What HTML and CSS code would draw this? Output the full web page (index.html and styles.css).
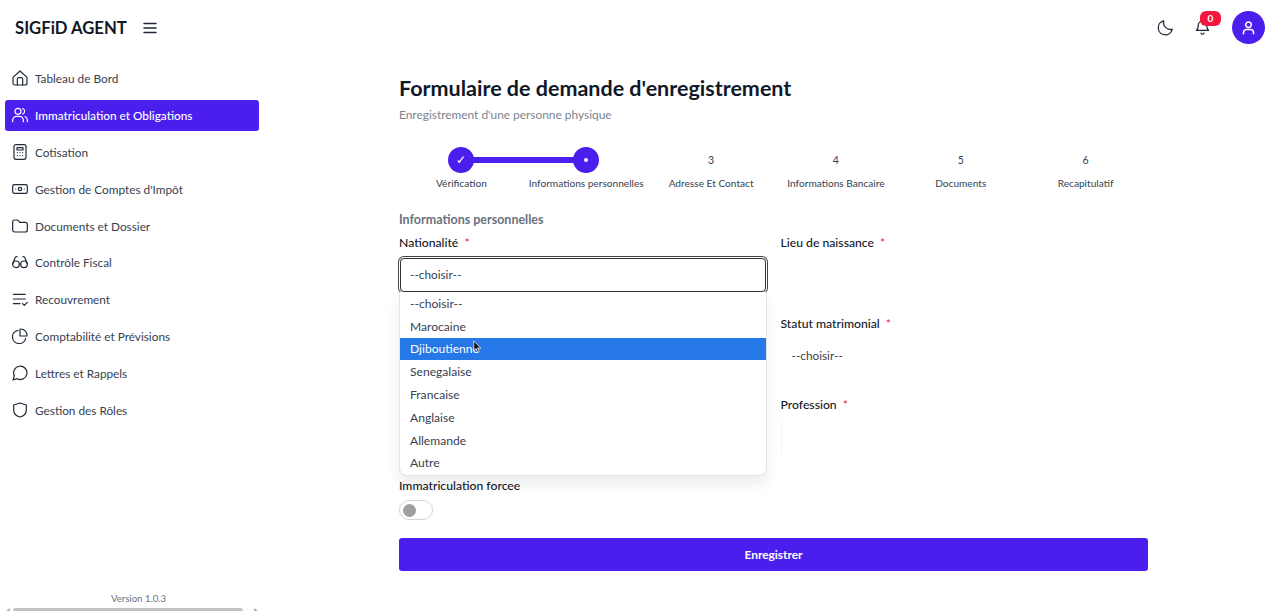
FILE: index.html
```html
<!DOCTYPE html>
<html lang="fr">
<head>
<meta charset="utf-8">
<title>SIGFiD AGENT</title>
<link rel="stylesheet" href="styles.css">
</head>
<body>
<div class="app">
  <aside class="sidebar">
    <div class="brand">
      <span class="brand-name">SIGFiD AGENT</span>
      <svg class="burger" viewBox="0 0 24 24"><path d="M4 6h16M4 12h16M4 18h16"/></svg>
    </div>
    <nav class="nav">
      <a class="nav-item"><svg class="ico" viewBox="0 0 24 24"><path d="M1.500 11 12 1.500 22.500 11v8.500a3 3 0 0 1-3 3h-15a3 3 0 0 1-3-3z"/><path d="M8 22.500V13.500a2 2 0 0 1 2-2h4a2 2 0 0 1 2 2v9"/></svg>Tableau de Bord</a>
      <a class="nav-item active"><svg class="ico" viewBox="0 0 24 24"><circle cx="9" cy="6.500" r="4.500"/><path d="M1 22v-2a6 6 0 0 1 6-6h4a6 6 0 0 1 6 6v2"/><path d="M16 2.300a4.500 4.500 0 0 1 0 8.400M19.500 14.300A6 6 0 0 1 23 20v2"/></svg>Immatriculation et Obligations</a>
      <a class="nav-item"><svg class="ico" viewBox="0 0 24 24"><rect x="3" y="1" width="18" height="22" rx="3"/><path d="M7.500 5.500h9v3.500h-9zM8 13h.01M12 13h.01M16 13h.01M8 17.500h.01M12 17.500h.01M16 17.500h.01"/></svg>Cotisation</a>
      <a class="nav-item"><svg class="ico" viewBox="0 0 24 24"><rect x="1" y="5.500" width="22" height="13" rx="2.500"/><circle cx="12" cy="12" r="2.500"/><path d="M5.500 12h.01M18.500 12h.01"/></svg>Gestion de Comptes d'Impôt</a>
      <a class="nav-item"><svg class="ico" viewBox="0 0 24 24"><path d="M1 6a3 3 0 0 1 3-3h4.800l2.700 3.500H20a3 3 0 0 1 3 3V18a3 3 0 0 1-3 3H4a3 3 0 0 1-3-3z"/></svg>Documents et Dossier</a>
      <a class="nav-item"><svg class="ico" viewBox="0 0 24 24"><circle cx="6" cy="15.500" r="5"/><circle cx="18" cy="15.500" r="5"/><path d="M11 15h2M1 15 4.500 6A3 3 0 0 1 7.500 4M23 15 19.500 6A3 3 0 0 0 16.500 4"/></svg>Contrôle Fiscal</a>
      <a class="nav-item"><svg class="ico" viewBox="0 0 24 24"><path d="M2 5h18M2 12h18M2 19h10M16 19l2.500 2.500L23 17"/></svg>Recouvrement</a>
      <a class="nav-item"><svg class="ico" viewBox="0 0 24 24"><path d="M9 3.500a10 10 0 1 0 11.500 12"/><path d="M13 1.500a9.500 9.500 0 0 1 9.500 9.500v1H12V2.500a1 1 0 0 1 1-1z"/></svg>Comptabilité et Prévisions</a>
      <a class="nav-item"><svg class="ico" viewBox="0 0 24 24"><path d="M1.500 22.500l2-6.200A10 10 0 1 1 7.500 20.500z"/></svg>Lettres et Rappels</a>
      <a class="nav-item"><svg class="ico" viewBox="0 0 24 24"><path d="M12 1.500 21.500 4.500V12c0 5.500-4 9-9.500 10.500C6.500 21 2.500 17.500 2.500 12V4.500z"/></svg>Gestion des Rôles</a>
    </nav>
    <div class="version">Version 1.0.3</div>
    <div class="hscroll"><span class="arrow left"></span><span class="thumb"></span><span class="arrow right"></span></div>
  </aside>
  <div class="content">
    <header class="topbar">
      <svg class="top-ico" viewBox="0 0 24 24"><path d="M21.500 14.500A10 10 0 0 1 9.500 2.500a10 10 0 1 0 12 12z"/></svg>
      <span class="bell">
        <svg class="top-ico" viewBox="0 0 24 24"><path d="M6 9a6 6 0 0 1 12 0c0 5 2.500 7 2.500 7h-17S6 14 6 9zM10 20a2.200 2.200 0 0 0 4 0"/></svg>
        <span class="badge">0</span>
      </span>
      <span class="avatar"><svg viewBox="0 0 24 24"><circle cx="12" cy="7.500" r="4.500"/><path d="M4 22v-2a5 5 0 0 1 5-5h6a5 5 0 0 1 5 5v2"/></svg></span>
    </header>
    <main class="main">
      <h1 class="title">Formulaire de demande d'enregistrement</h1>
      <p class="subtitle">Enregistrement d'une personne physique</p>
      <ol class="steps">
        <li class="step done"><span class="dot">✓</span><span class="step-label">Vérification</span></li>
        <li class="step current"><span class="dot"><i class="pip"></i></span><span class="step-label">Informations personnelles</span></li>
        <li class="step"><span class="dot">3</span><span class="step-label">Adresse Et Contact</span></li>
        <li class="step"><span class="dot">4</span><span class="step-label">Informations Bancaire</span></li>
        <li class="step"><span class="dot">5</span><span class="step-label">Documents</span></li>
        <li class="step"><span class="dot">6</span><span class="step-label">Recapitulatif</span></li>
      </ol>
      <h2 class="section">Informations personnelles</h2>
      <form class="form">
        <div class="field nat">
          <label class="label">Nationalité <b>*</b></label>
          <div class="select focus">--choisir--</div>
          <ul class="dropdown">
            <li>--choisir--</li>
            <li>Marocaine</li>
            <li class="hover">Djiboutienne<svg class="cursor" viewBox="0 0 12 18"><path d="M1 1v13l3.200-3 2.100 5 2-.9-2.100-4.800H10.500z"/></svg></li>
            <li>Senegalaise</li>
            <li>Francaise</li>
            <li>Anglaise</li>
            <li>Allemande</li>
            <li>Autre</li>
          </ul>
        </div>
        <div class="field">
          <label class="label">Lieu de naissance <b>*</b></label>
        </div>
        <div class="field"></div>
        <div class="field">
          <label class="label">Statut matrimonial <b>*</b></label>
          <div class="select plain">--choisir--</div>
        </div>
        <div class="field"></div>
        <div class="field">
          <label class="label">Profession <b>*</b></label>
          <div class="select ghost"></div>
        </div>
        <div class="field">
          <label class="label">Immatriculation forcee</label>
          <span class="toggle"><i></i></span>
        </div>
      </form>
      <button class="submit" type="button">Enregistrer</button>
    </main>
  </div>
</div>
</body>
</html>
```
FILE: styles.css
```css
* { box-sizing: border-box; }
html, body { margin: 0; height: 611px; overflow: hidden; background: #fff; }
body { font-family: Lato, Roboto, "Liberation Sans", sans-serif; color: #1f2937; }
.app { display: flex; height: 611px; }

.sidebar { width: 270px; flex: none; display: flex; flex-direction: column; position: relative; }
.brand { height: 55px; display: flex; align-items: center; gap: 14px; padding-left: 15px; }
.brand-name { font-size: 16.700px; font-weight: 700; color: #111827; }
.burger { width: 18px; height: 18px; fill: none; stroke: #1f2937; stroke-width: 2; stroke-linecap: round; }
.nav { display: flex; flex-direction: column; gap: 5.800px; padding: 8.400px 11px 0 5px; }
.nav-item { height: 31px; display: flex; align-items: center; gap: 7px; padding: 0 0 0 7px; font-size: 11.800px; color: #374151; border-radius: 3px; }
.nav-item.active { background: #4a1fee; color: #fff; font-weight: 500; }
.ico { width: 16px; height: 16px; flex: none; margin-top: -1px; fill: none; stroke: #1f2937; stroke-width: 1.800; stroke-linecap: round; stroke-linejoin: round; }
.active .ico { stroke: #fff; }
.version { margin-top: auto; text-align: center; font-size: 9.600px; line-height: 14px; color: #6b7280; padding: 2px 0 0 7px; width: 270px; }
.hscroll { height: 5px; display: flex; align-items: flex-start; padding: 0 6px; overflow: hidden; }
.thumb { width: 230px; height: 5px; background: #c1c1c1; border-radius: 3px 3px 0 0; margin: 2px 11px 0 3px; }
.arrow { width: 0; height: 0; margin-top: 2px; border-top: 3px solid transparent; border-bottom: 3px solid transparent; }
.arrow.left { border-right: 4px solid #b0b0b0; }
.arrow.right { border-left: 4px solid #b0b0b0; }

.content { flex: 1; min-width: 0; display: flex; flex-direction: column; }
.topbar { height: 55px; display: flex; align-items: center; justify-content: flex-end; padding-right: 15px; }
.top-ico { display: block; width: 17px; height: 17px; fill: none; stroke: #1f2937; stroke-width: 1.800; stroke-linecap: round; stroke-linejoin: round; }
.bell { position: relative; margin-left: 20px; margin-right: 21px; }
.badge { position: absolute; left: 6px; top: -8px; width: 21px; height: 15px; border-radius: 6px; background: #f5163f; color: #fff; font-size: 10px; font-weight: 700; line-height: 15px; text-align: center; }
.avatar { width: 33px; height: 33px; border-radius: 50%; background: #4a1fee; display: flex; align-items: center; justify-content: center; }
.avatar svg { width: 15px; height: 15px; fill: none; stroke: #fff; stroke-width: 2.400; stroke-linecap: round; }

.main { padding: 20px 132px 0 129px; }
.title { margin: 0; font-size: 21.500px; line-height: 27px; font-weight: 700; color: #111827; }
.subtitle { margin: 5px 0 0; font-size: 11.900px; line-height: 16px; color: #7b8490; }
.steps { list-style: none; margin: 24px 0 0; padding: 0; display: grid; grid-template-columns: repeat(6, 1fr); }
.step { display: flex; flex-direction: column; align-items: center; position: relative; font-size: 10.150px; color: #374151; }
.dot { position: relative; z-index: 1; width: 26px; height: 26px; border-radius: 50%; display: flex; align-items: center; justify-content: center; font-size: 10.500px; line-height: 1; color: #374151; }
.done .dot, .current .dot { background: #4a1fee; color: #fff; font-size: 12px; }
.pip { width: 4px; height: 4px; border-radius: 50%; background: #fff; }
.current::before { content: ""; position: absolute; top: 10px; left: -50%; width: 100%; height: 6px; background: #4a1fee; }
.step-label { margin-top: 3px; line-height: 14px; }

.section { margin: 22px 0 0; font-size: 12.500px; line-height: 16px; font-weight: 700; color: #6b7280; }
.form { display: grid; grid-template-columns: 1fr 1fr; grid-template-rows: 81px 81px 81px 60px; column-gap: 14px; margin-top: 7px; }
.field { position: relative; min-width: 0; }
.label { display: block; font-size: 12.200px; line-height: 16px; font-weight: 500; color: #111827; }
.label b { color: #f5163f; font-weight: 400; margin-left: 3px; }
.select { height: 36px; margin-top: 6px; padding: 0 11px 2px; display: flex; align-items: center; font-size: 11.800px; color: #374151; border-radius: 4px; }
.select.focus { border: 1px solid #333; box-shadow: 0 0 0 1px #fff, 0 0 0 2px #444; height: 34px; margin: 7px 1px 0; padding-left: 9px; }
.ghost { border-left: 1px solid #f3f4f6; }
.dropdown { position: absolute; z-index: 5; top: 57px; left: 0; right: 0; margin: 0; padding: 0; list-style: none; background: #fff; border: 1px solid #e2e4e8; border-top: 0; border-radius: 0 0 8px 8px; box-shadow: 0 8px 14px rgba(0,0,0,.08); font-size: 12.100px; color: #374151; height: 184px; }
.dropdown li { height: 22.800px; display: flex; align-items: center; padding-left: 10px; position: relative; }
.dropdown .hover { background: #2678e8; color: #fff; }
.cursor { position: absolute; left: 73px; top: 2px; width: 9px; height: 14px; fill: #111; stroke: #fff; stroke-width: 1; }
.toggle { display: block; margin-top: 6px; width: 34px; height: 20px; border: 1px solid #d1d5db; border-radius: 10px; position: relative; background: #fff; }
.toggle i { position: absolute; left: 3px; top: 3px; width: 13px; height: 13px; border-radius: 50%; background: #a0a0a0; }
.submit { display: block; width: 100%; height: 33px; border: 0; border-radius: 3px; background: #4a1fee; color: #fff; font: 700 11.900px Lato, sans-serif; }
```
